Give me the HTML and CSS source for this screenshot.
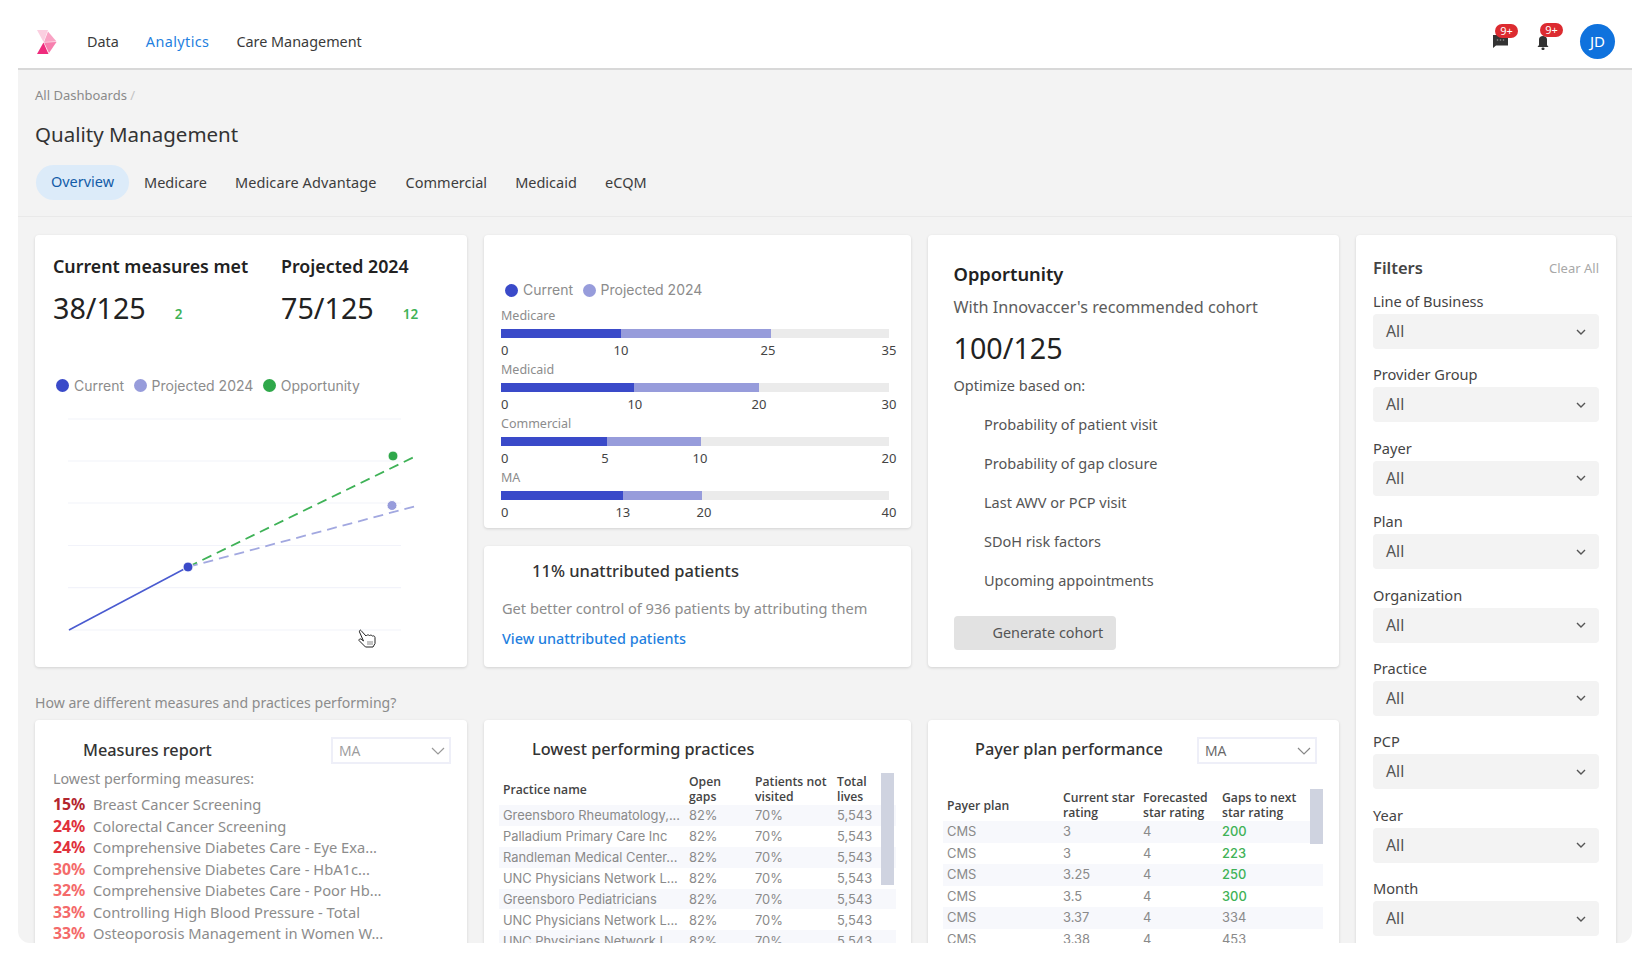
FILE: index.html
```html
<!DOCTYPE html>
<html lang="en">
<head>
<meta charset="utf-8">
<title>Quality Management</title>
<link rel="stylesheet" href="styles.css">
</head>
<body>
<div class="frame">
  <header class="topbar">
    <svg class="logo" viewBox="0 0 20 24" width="20" height="24">
      <polygon points="0,0 11,0 6.5,12 " fill="#fbcfe0"/>
      <polygon points="11,1.5 19.5,11.5 7,12" fill="#f9a3c4"/>
      <polygon points="7,12.5 19.5,12 12,23" fill="#f77fae"/>
      <polygon points="6.5,12.5 11.5,24 0,24" fill="#ef2b7c"/>
    </svg>
    <nav class="mainnav">
      <a class="navlink">Data</a>
      <a class="navlink navlink-active">Analytics</a>
      <a class="navlink">Care Management</a>
    </nav>
    <div class="topicons">
      <div class="iconwrap iconwrap-msg">
        <svg viewBox="0 0 15 13" width="15" height="13"><path d="M0 0H15V10.5H3L0 13Z" fill="#333"/><circle cx="4.5" cy="5" r=".8" fill="#999"/><circle cx="7.5" cy="5" r=".8" fill="#999"/><circle cx="10.5" cy="5" r=".8" fill="#999"/></svg>
        <span class="badge">9+</span>
      </div>
      <div class="iconwrap iconwrap-bell">
        <svg viewBox="0 0 12 14" width="12" height="14"><path d="M2 9V3.5C2 1.5 3.500 0 6 0S10 1.500 10 3.500V9L11.500 11H.5Z" fill="#333"/><rect x="4.500" y="11.500" width="3" height="2.500" rx="1" fill="#333"/></svg>
        <span class="badge">9+</span>
      </div>
      <div class="avatar">JD</div>
    </div>
  </header>

  <section class="subhead">
    <div class="crumb">All Dashboards <span class="crumb-sep">/</span></div>
    <h1 class="pagetitle">Quality Management</h1>
    <div class="tabs">
      <a class="tab tab-active">Overview</a>
      <a class="tab tab-medicare">Medicare</a>
      <a class="tab tab-ma">Medicare Advantage</a>
      <a class="tab tab-comm">Commercial</a>
      <a class="tab tab-medicaid">Medicaid</a>
      <a class="tab tab-ecqm">eCQM</a>
    </div>
  </section>

  <main class="body">
    <div class="content">
      <article class="card card-measures">
        <div class="stats">
          <div class="stat stat-current">
            <h2 class="stat-title">Current measures met</h2>
            <div class="stat-row"><span class="bignum">38/125</span><span class="delta delta-one">2</span></div>
          </div>
          <div class="stat">
            <h2 class="stat-title">Projected 2024</h2>
            <div class="stat-row"><span class="bignum">75/125</span><span class="delta delta-two">12</span></div>
          </div>
        </div>
        <div class="legend legend-chart">
          <span class="legend-item"><i class="dot dot-current"></i>Current</span>
          <span class="legend-item"><i class="dot dot-projected"></i>Projected 2024</span>
          <span class="legend-item"><i class="dot dot-opp"></i>Opportunity</span>
        </div>
        <svg class="linechart" viewBox="35 410 432 250" width="432" height="250">
          <g stroke="#f2f3fa" stroke-width="1.200">
            <line x1="68" y1="418" x2="401" y2="418"/>
            <line x1="68" y1="460" x2="401" y2="460"/>
            <line x1="68" y1="502" x2="401" y2="502"/>
            <line x1="68" y1="544.500" x2="401" y2="544.500"/>
            <line x1="68" y1="586.700" x2="401" y2="586.700"/>
            <line x1="68" y1="629" x2="401" y2="629"/>
          </g>
          <line x1="69" y1="629" x2="188" y2="566" stroke="#4a5bd0" stroke-width="1.600"/>
          <line x1="188" y1="566" x2="416" y2="455" stroke="#3fb257" stroke-width="1.800" stroke-dasharray="10 6"/>
          <line x1="188" y1="566" x2="416" y2="505" stroke="#a2a8e0" stroke-width="1.800" stroke-dasharray="10 6"/>
          <circle cx="188" cy="566" r="5" fill="#3a4ac9" stroke="#fff" stroke-width="1"/>
          <circle cx="393" cy="455" r="5" fill="#2fa84a" stroke="#fff" stroke-width="1"/>
          <circle cx="392" cy="504.500" r="5" fill="#979cdb" stroke="#fff" stroke-width="1"/>
          <g transform="translate(358 628)" fill="#fff" stroke="#222" stroke-width="1">
            <path d="M3 1.500 8 7 8.500 6.500C9.500 5.500 11 6 11.500 6.500 12.500 5.800 14 6.300 14.500 7 15.500 6.500 17 7.200 17 8.500V14.500L15 18H7.500L1 11.500C.5 10.500 2 9.500 3 10L5.500 12 1.500 3C1 1.500 2.500.5 3 1.500Z"/>
            <path d="M10 12V16M12 12V16M14 12V16" stroke="#888"/>
          </g>
        </svg>
      </article>

      <div class="midstack">
        <article class="card card-bars">
          <div class="legend legend-bars">
            <span class="legend-item"><i class="dot dot-current"></i>Current</span>
            <span class="legend-item"><i class="dot dot-projected"></i>Projected 2024</span>
          </div>
          <div class="bargroup">
            <div class="barlabel">Medicare</div>
            <div class="bar"><i class="seg-current" style="width:30.9%"></i><i class="seg-projected" style="width:38.7%"></i></div>
            <div class="ticks"><span class="tick" style="width:30.9%"><b>0</b><b class="mark">10</b></span><span class="tick" style="width:37.9%"><b class="mark">25</b></span><span class="tick" style="width:31.2%"><b class="mark">35</b></span></div>
          </div>
          <div class="bargroup">
            <div class="barlabel">Medicaid</div>
            <div class="bar"><i class="seg-current" style="width:34.3%"></i><i class="seg-projected" style="width:32.2%"></i></div>
            <div class="ticks"><span class="tick" style="width:34.5%"><b>0</b><b class="mark">10</b></span><span class="tick" style="width:32%"><b class="mark">20</b></span><span class="tick" style="width:33.500%"><b class="mark">30</b></span></div>
          </div>
          <div class="bargroup">
            <div class="barlabel">Commercial</div>
            <div class="bar"><i class="seg-current" style="width:27.3%"></i><i class="seg-projected" style="width:24.2%"></i></div>
            <div class="ticks"><span class="tick" style="width:26.8%"><b>0</b><b class="mark">5</b></span><span class="tick" style="width:24.500%"><b class="mark">10</b></span><span class="tick" style="width:48.700%"><b class="mark">20</b></span></div>
          </div>
          <div class="bargroup">
            <div class="barlabel">MA</div>
            <div class="bar"><i class="seg-current" style="width:31.4%"></i><i class="seg-projected" style="width:20.4%"></i></div>
            <div class="ticks"><span class="tick" style="width:31.4%"><b>0</b><b class="mark">13</b></span><span class="tick" style="width:20.900%"><b class="mark">20</b></span><span class="tick" style="width:47.700%"><b class="mark">40</b></span></div>
          </div>
        </article>
        <article class="card card-unattr">
          <h3 class="unattr-title">11% unattributed patients</h3>
          <p class="unattr-text">Get better control of 936 patients by attributing them</p>
          <a class="unattr-link">View unattributed patients</a>
        </article>
      </div>

      <article class="card card-opp">
        <h2 class="opp-title">Opportunity</h2>
        <p class="opp-sub">With Innovaccer's recommended cohort</p>
        <div class="bignum opp-num">100/125</div>
        <p class="opp-opt">Optimize based on:</p>
        <ul class="opp-list">
          <li>Probability of patient visit</li>
          <li>Probability of gap closure</li>
          <li>Last AWV or PCP visit</li>
          <li>SDoH risk factors</li>
          <li>Upcoming appointments</li>
        </ul>
        <button class="genbtn">Generate cohort</button>
      </article>

      <p class="question">How are different measures and practices performing?</p>

      <article class="card card-report">
        <div class="cardhead">
          <h3 class="cardtitle">Measures report</h3>
          <div class="minisel minisel-dim">MA<svg viewBox="0 0 14 8" width="14" height="8"><path d="M1 1 7 7 13 1" fill="none" stroke="#999" stroke-width="1.200"/></svg></div>
        </div>
        <p class="report-sub">Lowest performing measures:</p>
        <ul class="report-list">
          <li><b class="pct pct-a">15%</b>Breast Cancer Screening</li>
          <li><b class="pct pct-b">24%</b>Colorectal Cancer Screening</li>
          <li><b class="pct pct-b">24%</b>Comprehensive Diabetes Care - Eye Exa...</li>
          <li><b class="pct pct-c">30%</b>Comprehensive Diabetes Care - HbA1c...</li>
          <li><b class="pct pct-c">32%</b>Comprehensive Diabetes Care - Poor Hb...</li>
          <li><b class="pct pct-c">33%</b>Controlling High Blood Pressure - Total</li>
          <li><b class="pct pct-c">33%</b>Osteoporosis Management in Women W...</li>
        </ul>
      </article>

      <article class="card card-practices">
        <h3 class="cardtitle practices-title">Lowest performing practices</h3>
        <div class="tablewrap tablewrap-practices">
          <table class="datatable practices">
            <thead><tr><th>Practice name</th><th>Open<br>gaps</th><th>Patients not<br>visited</th><th>Total<br>lives</th></tr></thead>
            <tbody>
              <tr><td>Greensboro Rheumatology,...</td><td>82%</td><td>70%</td><td>5,543</td></tr>
              <tr><td>Palladium Primary Care Inc</td><td>82%</td><td>70%</td><td>5,543</td></tr>
              <tr><td>Randleman Medical Center...</td><td>82%</td><td>70%</td><td>5,543</td></tr>
              <tr><td>UNC Physicians Network L...</td><td>82%</td><td>70%</td><td>5,543</td></tr>
              <tr><td>Greensboro Pediatricians</td><td>82%</td><td>70%</td><td>5,543</td></tr>
              <tr><td>UNC Physicians Network L...</td><td>82%</td><td>70%</td><td>5,543</td></tr>
              <tr><td>UNC Physicians Network L...</td><td>82%</td><td>70%</td><td>5,543</td></tr>
            </tbody>
          </table>
          <div class="scrollthumb thumb-practices"></div>
        </div>
      </article>

      <article class="card card-payer">
        <div class="cardhead payer-head">
          <h3 class="cardtitle">Payer plan performance</h3>
          <div class="minisel">MA<svg viewBox="0 0 14 8" width="14" height="8"><path d="M1 1 7 7 13 1" fill="none" stroke="#888" stroke-width="1.200"/></svg></div>
        </div>
        <div class="tablewrap tablewrap-payer">
          <table class="datatable payer">
            <thead><tr><th>Payer plan</th><th>Current star<br>rating</th><th>Forecasted<br>star rating</th><th>Gaps to next<br>star rating</th></tr></thead>
            <tbody>
              <tr><td>CMS</td><td>3</td><td>4</td><td class="good">200</td></tr>
              <tr><td>CMS</td><td>3</td><td>4</td><td class="good">223</td></tr>
              <tr><td>CMS</td><td>3.25</td><td>4</td><td class="good">250</td></tr>
              <tr><td>CMS</td><td>3.5</td><td>4</td><td class="good">300</td></tr>
              <tr><td>CMS</td><td>3.37</td><td>4</td><td>334</td></tr>
              <tr><td>CMS</td><td>3.38</td><td>4</td><td>453</td></tr>
            </tbody>
          </table>
          <div class="scrollthumb thumb-payer"></div>
        </div>
      </article>
    </div>

    <aside class="card filters">
      <div class="filters-head"><h2 class="filters-title">Filters</h2><span class="clearall">Clear All</span></div>
      <div class="fgroup"><label class="flabel">Line of Business</label><div class="fselect"><span class="fvalue">All</span><svg class="chev" viewBox="0 0 10 6" width="10" height="6"><path d="M1 1 5 5 9 1" fill="none" stroke="#555" stroke-width="1.400"/></svg></div></div>
      <div class="fgroup"><label class="flabel">Provider Group</label><div class="fselect"><span class="fvalue">All</span><svg class="chev" viewBox="0 0 10 6" width="10" height="6"><path d="M1 1 5 5 9 1" fill="none" stroke="#555" stroke-width="1.400"/></svg></div></div>
      <div class="fgroup"><label class="flabel">Payer</label><div class="fselect"><span class="fvalue">All</span><svg class="chev" viewBox="0 0 10 6" width="10" height="6"><path d="M1 1 5 5 9 1" fill="none" stroke="#555" stroke-width="1.400"/></svg></div></div>
      <div class="fgroup"><label class="flabel">Plan</label><div class="fselect"><span class="fvalue">All</span><svg class="chev" viewBox="0 0 10 6" width="10" height="6"><path d="M1 1 5 5 9 1" fill="none" stroke="#555" stroke-width="1.400"/></svg></div></div>
      <div class="fgroup"><label class="flabel">Organization</label><div class="fselect"><span class="fvalue">All</span><svg class="chev" viewBox="0 0 10 6" width="10" height="6"><path d="M1 1 5 5 9 1" fill="none" stroke="#555" stroke-width="1.400"/></svg></div></div>
      <div class="fgroup"><label class="flabel">Practice</label><div class="fselect"><span class="fvalue">All</span><svg class="chev" viewBox="0 0 10 6" width="10" height="6"><path d="M1 1 5 5 9 1" fill="none" stroke="#555" stroke-width="1.400"/></svg></div></div>
      <div class="fgroup"><label class="flabel">PCP</label><div class="fselect"><span class="fvalue">All</span><svg class="chev" viewBox="0 0 10 6" width="10" height="6"><path d="M1 1 5 5 9 1" fill="none" stroke="#555" stroke-width="1.400"/></svg></div></div>
      <div class="fgroup"><label class="flabel">Year</label><div class="fselect"><span class="fvalue">All</span><svg class="chev" viewBox="0 0 10 6" width="10" height="6"><path d="M1 1 5 5 9 1" fill="none" stroke="#555" stroke-width="1.400"/></svg></div></div>
      <div class="fgroup"><label class="flabel">Month</label><div class="fselect"><span class="fvalue">All</span><svg class="chev" viewBox="0 0 10 6" width="10" height="6"><path d="M1 1 5 5 9 1" fill="none" stroke="#555" stroke-width="1.400"/></svg></div></div>
    </aside>
  </main>
</div>
</body>
</html>
```
FILE: styles.css
```css
* { box-sizing: border-box; }
html, body { margin: 0; padding: 0; height: 961px; overflow: hidden; background: #fff; }
body { font-family: "Noto Sans", "Open Sans", sans-serif; color: #333; }
h1, h2, h3, p, ul { margin: 0; padding: 0; }
ul { list-style: none; }

.frame { margin-left: 18px; width: 1614px; height: 943px; overflow: hidden; background: #f3f3f3; border-radius: 0 0 12px 12px; }

.topbar { height: 70px; background: #fff; border-bottom: 2px solid #d8d8d8; display: flex; align-items: center; padding: 15px 17px 0 19px; }
.logo { display: block; flex: none; margin-top: 1px; }
.mainnav { display: flex; margin-left: 30px; gap: 27px; }
.navlink { font-size: 14.400px; line-height: 20px; color: #3a3a3a; }
.navlink-active { color: #1f7fe0; letter-spacing: .4px; }
.topicons { margin-left: auto; display: flex; align-items: center; }
.iconwrap { position: relative; display: block; }
.iconwrap svg { display: block; }
.iconwrap-bell { margin-left: 29px; margin-top: 3px; }
.badge { position: absolute; left: 2px; top: -11px; width: 23px; height: 14px; border-radius: 7px; background: #dc2b30; color: #fff; font-size: 11px; line-height: 14px; text-align: center; }
.iconwrap-bell .badge { left: 3px; top: -13px; }
.avatar { margin-left: 31px; width: 35px; height: 35px; border-radius: 50%; background: #0f72dd; color: #fff; font-size: 15px; line-height: 35px; text-align: center; }

.subhead { height: 147px; border-bottom: 1px solid #e9e9e9; padding: 16px 0 0 17px; }
.crumb { font-size: 13px; line-height: 18px; color: #8a8a8a; }
.crumb-sep { color: #c4c4c4; }
.pagetitle { margin-top: 17px; font-size: 20.500px; font-weight: 400; line-height: 26px; color: #333; }
.tabs { margin-top: 18px; margin-left: 1px; display: flex; align-items: center; height: 35px; }
.tab { font-size: 14.500px; line-height: 20px; padding-bottom: 2px; color: #3d3d3d; white-space: nowrap; }
.tab-active { margin-left: 0; width: 93px; height: 35px; padding-bottom: 0; line-height: 33px; text-align: center; border-radius: 18px; background: #dcebf9; color: #135ca8; }
.tab-medicare { margin-left: 15px; }
.tab-ma { margin-left: 28px; letter-spacing: .1px; }
.tab-comm { margin-left: 29px; }
.tab-medicaid { margin-left: 28px; }
.tab-ecqm { margin-left: 28px; letter-spacing: .1px; }

.body { display: flex; align-items: flex-start; gap: 17px; padding: 18px 0 0 17px; }
.content { display: grid; grid-template-columns: 432px 427px 411px; column-gap: 17px; width: 1304px; }
.card { background: #fff; border-radius: 4px; box-shadow: 0 1px 3px rgba(0, 0, 0, .14); }

.card-measures { height: 432px; padding: 20px 0 0 18px; }
.stats { display: flex; }
.stat-current { width: 228px; }
.stat-title { font-size: 17.800px; font-weight: 600; line-height: 22px; color: #222; white-space: nowrap; }
.stat-row { margin-top: 11px; display: flex; align-items: baseline; }
.bignum { font-size: 28.700px; line-height: 40px; color: #222; font-weight: 400; }
.delta { font-size: 13.500px; font-weight: 600; color: #3fb257; }
.delta-one { margin-left: 29px; }
.delta-two { margin-left: 29px; }

.legend { display: flex; gap: 9.500px; font-family: Inter, sans-serif; font-size: 14px; line-height: 18px; color: #8c8c8c; }
.legend-item { display: flex; align-items: center; white-space: nowrap; }
.dot { display: block; width: 13px; height: 13px; border-radius: 50%; margin-right: 5px; }
.dot-current { background: #3a4ac9; }
.dot-projected { background: #979cdb; }
.dot-opp { background: #2fa84a; }
.legend-chart { margin-top: 48.500px; padding-left: 3px; }
.linechart { display: block; margin: 16px 0 0 -18px; }

.midstack { display: flex; flex-direction: column; gap: 18px; height: 432px; }
.card-bars { height: 293px; padding: 46px 22px 0 17px; }
.legend-bars { padding-left: 4px; margin-bottom: 9px; }
.bargroup { height: 54px; }
.barlabel { font-size: 12.500px; line-height: 16px; color: #8c8c8c; }
.bar { margin-top: 5px; height: 9px; background: #ebebeb; display: flex; }
.seg-current { display: block; height: 9px; background: #3a4ac9; }
.seg-projected { display: block; height: 9px; background: #979cdb; }
.ticks { margin-top: 4px; display: flex; font-size: 13px; line-height: 16px; color: #444; }
.tick { display: flex; justify-content: space-between; }
.tick:not(:first-child) { justify-content: flex-end; }
.tick b { font-weight: 400; }
.mark { transform: translateX(50%); }

.card-unattr { flex: 1; padding: 14px 18px 0; }
.unattr-title { padding-left: 30px; font-size: 16.500px; font-weight: 500; line-height: 22px; color: #333; }
.unattr-text { margin-top: 17px; font-size: 14.600px; line-height: 18px; color: #8c8c8c; white-space: nowrap; }
.unattr-link { display: block; margin-top: 13px; font-size: 14.400px; font-weight: 500; line-height: 18px; color: #1f7fe0; }

.card-opp { height: 432px; padding: 26px 0 0 25.500px; }
.opp-title { font-size: 18.300px; font-weight: 600; line-height: 26px; color: #222; }
.opp-sub { margin-top: 9px; font-size: 16.200px; line-height: 22px; color: #5c5c5c; }
.opp-num { margin-top: 10px; }
.opp-opt { margin-top: 7px; font-size: 14.500px; line-height: 20px; color: #555; }
.opp-list { margin-top: 10px; padding-left: 30.500px; }
.opp-list li { height: 38.900px; line-height: 38.900px; font-size: 14.500px; color: #555; }
.genbtn { display: block; margin-top: 17px; width: 162px; height: 34px; border: 0; border-radius: 4px; background: #e2e2e2; color: #555; font: inherit; font-size: 14.400px; text-align: left; padding: 0 0 2px 39px; }

.question { grid-column: 1 / -1; padding: 27px 0 8px; font-size: 14.100px; line-height: 18px; color: #8c8c8c; }

.card-report, .card-practices, .card-payer { height: 300px; }
.cardhead { display: flex; align-items: center; justify-content: space-between; padding-top: 17px; }
.cardtitle { font-size: 16.300px; font-weight: 500; line-height: 24px; color: #333; white-space: nowrap; }
.card-report .cardtitle { padding-bottom: 2px; }
.payer-head .cardtitle { line-height: 20px; padding-bottom: 4px; }
.minisel { width: 120px; height: 27px; border: 2px solid #eeeff8; display: flex; align-items: center; justify-content: space-between; padding: 0 4px 0 6px; font-family: "Open Sans", sans-serif; font-size: 14px; color: #666; }
.minisel-dim { color: #9c9c9c; }

.card-report { padding-left: 18px; }
.card-report .cardhead { padding-left: 30px; padding-right: 16px; }
.report-sub { margin-top: 6px; font-size: 14.300px; line-height: 18px; color: #8c8c8c; }
.report-list { margin-top: 6px; }
.report-list li { height: 21.500px; line-height: 21.500px; font-size: 14.700px; color: #8c8c8c; white-space: nowrap; display: flex; }
.pct { width: 40px; font-size: 15.800px; font-weight: 700; flex: none; }
.pct-a { color: #b3262e; }
.pct-b { color: #e0313b; }
.pct-c { color: #f46a6a; }

.practices-title { padding: 17px 0 0 48px; }
.tablewrap { position: relative; }
.tablewrap-practices { margin: 12px 0 0 15px; width: 397px; }
.tablewrap-payer { margin: 25px 0 0 15px; width: 380px; }
.payer-head { padding-left: 47px; padding-right: 22px; }
.datatable { width: 100%; border-collapse: collapse; table-layout: fixed; }
.datatable th { height: 32px; padding: 0 0 0 4px; font-family: "Open Sans", sans-serif; font-size: 12.200px; font-weight: 600; line-height: 15px; text-align: left; color: #444; white-space: nowrap; }
.datatable td { padding: 0 0 0 4px; font-family: Inter, sans-serif; font-size: 12.900px; color: #8a8a8a; white-space: nowrap; overflow: hidden; }
.datatable tbody tr:nth-child(odd) { background: #f7f8fc; }
.practices td { height: 20.900px; padding-top: 1px; }
.payer td { height: 21.500px; }
.practices th:nth-child(1) { width: 186px; }
.practices th:nth-child(2) { width: 66px; }
.practices th:nth-child(3) { width: 82px; }
.payer th:nth-child(1) { width: 116px; }
.payer th:nth-child(2) { width: 80px; }
.payer th:nth-child(3) { width: 79px; }
.datatable td.good { color: #3fb257; font-weight: 500; }
.scrollthumb { position: absolute; background: #cfd3e0; width: 13px; }
.thumb-practices { left: 382px; top: 0; height: 112px; }
.thumb-payer { left: 367px; top: 0; height: 55px; }

.filters { width: 260px; height: 760px; padding: 21px 17px 0 17px; flex: none; }
.filters-head { display: flex; align-items: center; justify-content: space-between; height: 24px; margin-bottom: 12px; }
.filters-title { font-size: 16.500px; font-weight: 600; line-height: 24px; color: #444; }
.clearall { font-size: 13px; color: #a8a8a8; }
.fgroup { height: 73.400px; }
.flabel { display: block; font-size: 14.600px; line-height: 18px; color: #444; }
.fselect { margin-top: 4px; height: 35px; border-radius: 4px; background: #f3f3f3; display: flex; align-items: center; justify-content: space-between; padding: 0 13px; color: #555; }
.fvalue { font-size: 15.800px; line-height: 22px; padding-bottom: 1px; }
.chev { display: block; }
```
